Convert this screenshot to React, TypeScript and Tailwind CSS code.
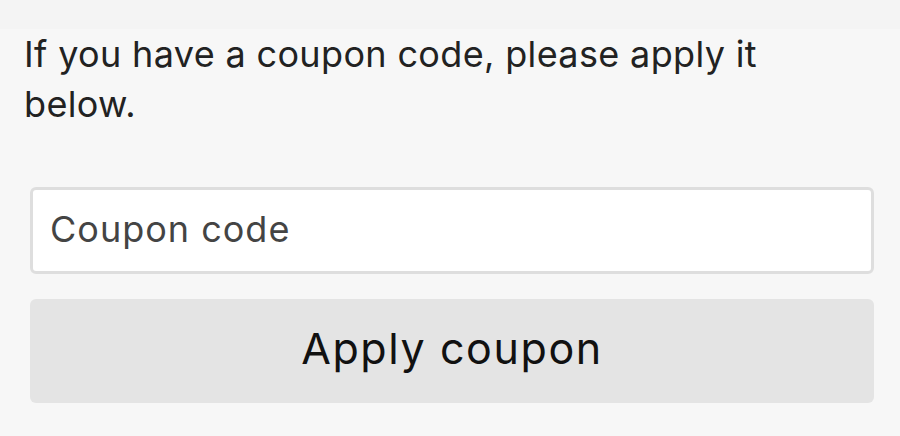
export default function App() {
  return (
    <div className="min-h-[436px] w-[900px] bg-[#f7f7f7] font-['Inter',sans-serif]">
      <div className="h-[29px] bg-[#f4f4f4]" />
      <div className="px-[24px]">
        <p className="text-[36px] leading-[50px] tracking-[0.35px] text-[#222222]">
          If you have a coupon code, please apply it below.
        </p>
        <form className="mt-[58px] flex flex-col gap-[25px] pl-[6px] pr-[2px]" onSubmit={(e) => e.preventDefault()}>
          <input
            type="text"
            placeholder="Coupon code"
            className="h-[87px] w-full rounded-[6px] border-[3px] border-[#dedede] bg-white px-[17px] pb-[4px] text-[36px] tracking-[1px] text-[#444444] outline-none placeholder:text-[#444444]"
          />
          <button
            type="submit"
            className="flex h-[104px] w-full items-center justify-center rounded-[6px] bg-[#e4e4e4] pb-[6px] text-[43px] tracking-[1.6px] text-[#111111]"
          >
            Apply coupon
          </button>
        </form>
      </div>
    </div>
  );
}
